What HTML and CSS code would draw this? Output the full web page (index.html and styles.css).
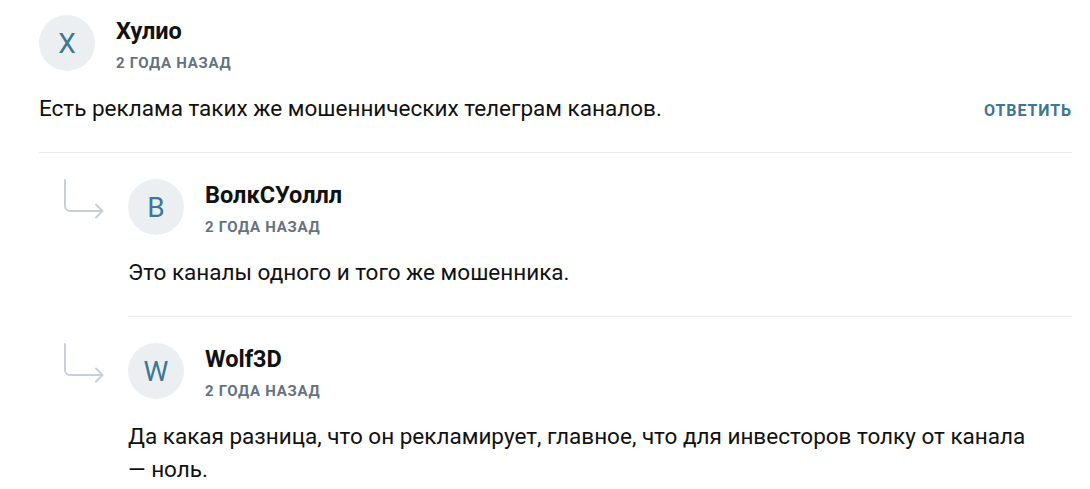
FILE: index.html
```html
<!DOCTYPE html>
<html lang="ru">
<head>
<meta charset="utf-8">
<link rel="stylesheet" href="styles.css">
</head>
<body>
<div class="comments">
  <div class="comment">
    <div class="head">
      <div class="avatar">Х</div>
      <div class="meta">
        <div class="name">Хулио</div>
        <div class="date">2 года назад</div>
      </div>
    </div>
    <div class="row">
      <p class="text">Есть реклама таких же мошеннических телеграм каналов.</p>
      <a class="reply-btn">Ответить</a>
    </div>
  </div>

  <div class="reply">
    <svg class="arrow" width="42" height="40" viewBox="0 0 42 40" fill="none" stroke="#c8cfd6" stroke-width="2" stroke-linecap="round" stroke-linejoin="round">
      <path d="M2 1V27a5 5 0 0 0 5 5H39"/>
      <path d="M33 25.5L39.5 32L33 38.5"/>
    </svg>
    <div class="comment sub">
      <div class="head">
        <div class="avatar">В</div>
        <div class="meta">
          <div class="name">ВолкСУоллл</div>
          <div class="date">2 года назад</div>
        </div>
      </div>
      <div class="row">
        <p class="text">Это каналы одного и того же мошенника.</p>
      </div>
    </div>
  </div>

  <div class="reply">
    <svg class="arrow" width="42" height="40" viewBox="0 0 42 40" fill="none" stroke="#c8cfd6" stroke-width="2" stroke-linecap="round" stroke-linejoin="round">
      <path d="M2 1V27a5 5 0 0 0 5 5H39"/>
      <path d="M33 25.5L39.5 32L33 38.5"/>
    </svg>
    <div class="comment sub last">
      <div class="head">
        <div class="avatar">W</div>
        <div class="meta">
          <div class="name">Wolf3D</div>
          <div class="date">2 года назад</div>
        </div>
      </div>
      <div class="row">
        <p class="text">Да какая разница, что он рекламирует, главное, что для инвесторов толку от канала —&nbsp;ноль.</p>
      </div>
    </div>
  </div>
</div>
</body>
</html>
```

FILE: styles.css
```css
* { box-sizing: border-box; }
html, body { margin: 0; padding: 0; background: #fff; }
body {
  font-family: Roboto, "Liberation Sans", sans-serif;
  color: #111;
  overflow: hidden;
}
.comments {
  padding: 15px 18px 0 39px;
}
.comment {
  flex: 1;
  min-width: 0;
  border-bottom: 1px solid #ececec;
  padding-bottom: 27px;
}
.comment.last { border-bottom: none; }
.head {
  display: flex;
  align-items: flex-start;
}
.avatar {
  width: 56px;
  height: 56px;
  border-radius: 50%;
  background: #eceff2;
  color: #3c7793;
  font-size: 28px;
  display: flex;
  align-items: center;
  justify-content: center;
  flex-shrink: 0;
}
.meta {
  margin-left: 21px;
  padding-top: 3px;
}
.name {
  font-size: 23.5px;
  font-weight: 700;
  line-height: 26px;
  color: #111;
}
.date {
  margin-top: 10px;
  font-size: 15px;
  font-weight: 700;
  line-height: 18px;
  letter-spacing: 0.7px;
  text-transform: uppercase;
  color: #66727f;
}
.row {
  display: flex;
  justify-content: space-between;
  align-items: baseline;
  margin-top: 20px;
}
.text {
  margin: 0;
  font-size: 22.5px;
  line-height: 33px;
  color: #111;
}
.reply-btn {
  font-size: 16px;
  font-weight: 700;
  letter-spacing: 0.9px;
  text-transform: uppercase;
  color: #3c7793;
  cursor: pointer;
}
.reply {
  display: flex;
  align-items: flex-start;
  padding-left: 24px;
}
.arrow {
  flex-shrink: 0;
  margin-top: 26px;
  margin-right: 23px;
}
.sub {
  padding-top: 26px;
}
```
